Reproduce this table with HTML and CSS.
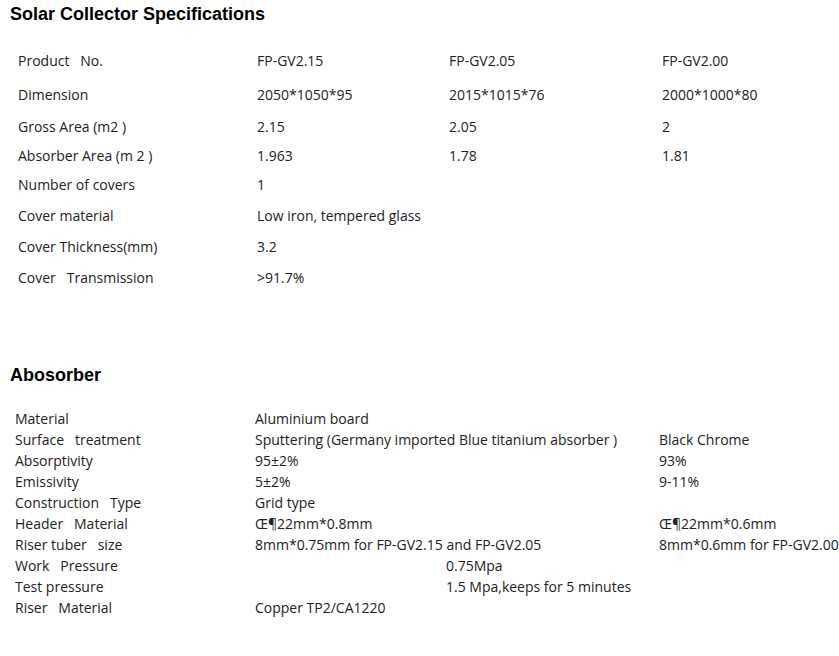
FILE: index.html
```html
<!DOCTYPE html>
<html>
<head>
<meta charset="utf-8">
<link rel="stylesheet" href="styles.css">
</head>
<body>
<div class="page">
  <h2 class="title">Solar Collector Specifications</h2>
  <div class="spec spec-a">
    <div>Product&nbsp;&nbsp; No.</div><div>FP-GV2.15</div><div>FP-GV2.05</div><div>FP-GV2.00</div>
    <div>Dimension</div><div>2050*1050*95</div><div>2015*1015*76</div><div>2000*1000*80</div>
    <div>Gross Area (m2 )</div><div>2.15</div><div>2.05</div><div>2</div>
    <div>Absorber Area (m 2 )</div><div>1.963</div><div>1.78</div><div>1.81</div>
    <div>Number of covers</div><div>1</div><div></div><div></div>
    <div>Cover material</div><div class="span3">Low iron, tempered glass</div>
    <div>Cover Thickness(mm)</div><div class="span3">3.2</div>
    <div>Cover&nbsp;&nbsp; Transmission</div><div class="span3">&gt;91.7%</div>
  </div>

  <h2 class="title title-b">Abosorber</h2>
  <div class="spec spec-b">
    <div>Material</div><div class="span2">Aluminium board</div><div></div>
    <div>Surface&nbsp;&nbsp; treatment</div><div class="span2">Sputtering (Germany imported Blue titanium absorber )</div><div>Black Chrome</div>
    <div>Absorptivity</div><div class="span2">95±2%</div><div>93%</div>
    <div>Emissivity</div><div class="span2">5±2%</div><div>9-11%</div>
    <div>Construction&nbsp;&nbsp; Type</div><div class="span2">Grid type</div><div></div>
    <div>Header&nbsp;&nbsp; Material</div><div class="span2">Œ¶22mm*0.8mm</div><div>Œ¶22mm*0.6mm</div>
    <div>Riser tuber&nbsp;&nbsp; size</div><div class="span2">8mm*0.75mm for FP-GV2.15 and FP-GV2.05</div><div>8mm*0.6mm for FP-GV2.00</div>
    <div>Work&nbsp;&nbsp; Pressure</div><div></div><div class="span2">0.75Mpa</div>
    <div>Test pressure</div><div></div><div class="span2">1.5 Mpa,keeps for 5 minutes</div>
    <div>Riser&nbsp;&nbsp; Material</div><div class="span2">Copper TP2/CA1220</div><div></div>
  </div>
</div>
</body>
</html>
```

FILE: styles.css
```css
html, body {
  margin: 0;
  padding: 0;
  background: #fff;
  overflow: hidden;
}
.page {
  width: 839px;
  overflow: hidden;
  padding-top: 4px;
}
.title {
  font-family: "Liberation Sans", Arial, sans-serif;
  font-weight: bold;
  font-size: 18px;
  line-height: 20px;
  color: #000;
  margin: 0 0 0 10px;
}
.spec {
  display: grid;
  font-family: "Open Sans", sans-serif;
  font-size: 14px;
  color: #222;
  white-space: nowrap;
}
.spec > div {
  display: flex;
  align-items: center;
}
.spec-a {
  margin: 19px 0 0 18px;
  grid-template-columns: 239px 192px 213px 160px;
  grid-template-rows: 34px 34px 30px 28px 30px 32px 30px 32px;
}
.span3 { grid-column: span 3; }
.span2 { grid-column: span 2; }
.title-b {
  margin-top: 72px;
}
.spec-b {
  margin: 23px 0 0 15px;
  grid-template-columns: 240px 191px 213px 200px;
  grid-auto-rows: 21px;
}
```
